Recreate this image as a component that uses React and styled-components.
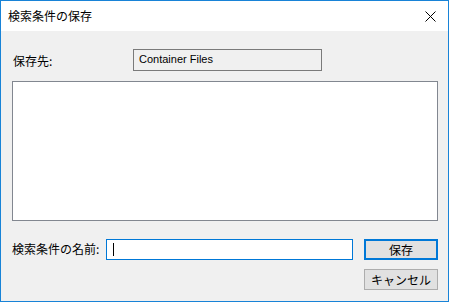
import React from 'react'
import styled, { createGlobalStyle } from 'styled-components'

const GlobalStyle = createGlobalStyle`
  html, body {
    margin: 0;
    padding: 0;
    background: #ffffff;
  }
  * { box-sizing: border-box; }
`

const uiFont = `"Noto Sans CJK JP", "Noto Sans", sans-serif`

const Window = styled.div`
  width: 449px;
  height: 302px;
  border: 1px solid #1883d7;
  background: #f0f0f0;
  display: flex;
  flex-direction: column;
  font-family: ${uiFont};
  font-size: 12px;
  color: #000;
  overflow: hidden;
`

const TitleBar = styled.div`
  height: 30px;
  flex: none;
  background: #ffffff;
  display: flex;
  align-items: center;
  justify-content: space-between;
  padding-left: 7px;
`

const Title = styled.span`
  font-size: 12px;
  line-height: 1;
  margin-top: -1px;
`

const CloseButton = styled.div`
  width: 46px;
  height: 30px;
  display: flex;
  align-items: center;
  justify-content: center;
  margin-right: -1px;
  padding-left: 8px;
`

const Body = styled.div`
  flex: 1;
  padding: 18px 10px 0 11px;
  display: flex;
  flex-direction: column;
`

const Row = styled.div`
  display: flex;
  align-items: ${p => p.$align || 'center'};
`

const Label = styled.span`
  width: ${p => p.$width}px;
  flex: none;
  padding-left: ${p => p.$pad || 0}px;
  line-height: 1;
  margin-top: ${p => p.$top || 0}px;
`

const ReadOnlyField = styled.div`
  width: 189px;
  height: 22px;
  border: 1px solid #7a7a7a;
  background: #f0f0f0;
  font-family: "Liberation Sans", Arial, sans-serif;
  font-size: 11px;
  padding: 3px 0 0 5px;
`

const ListBox = styled.div`
  margin-top: 10px;
  width: 426px;
  height: 140px;
  border: 1px solid #828790;
  background: #ffffff;
`

const BottomRow = styled(Row)`
  margin-top: 18px;
`

const TextInput = styled.div`
  width: 247px;
  height: 21px;
  flex: none;
  border: 1px solid #0078d7;
  background: #ffffff;
  display: flex;
  align-items: center;
  padding-left: 6px;
`

const Caret = styled.span`
  width: 1px;
  height: 13px;
  background: #000;
`

const ButtonColumn = styled.div`
  display: flex;
  flex-direction: column;
  gap: 9px;
  margin-left: 11px;
`

const Button = styled.div`
  width: 74px;
  height: ${p => (p.$default ? 21 : 21)}px;
  background: #e1e1e1;
  border: ${p => (p.$default ? '2px solid #0078d7' : '1px solid #adadad')};
  display: flex;
  align-items: center;
  justify-content: center;
  font-size: 12px;
  line-height: 1;
`

function CloseIcon() {
  return (
    <svg width="11" height="11" viewBox="0 0 11 11">
      <path d="M0.5 0.5 L10.5 10.5 M10.5 0.5 L0.5 10.5" stroke="#000" strokeWidth="1" fill="none" />
    </svg>
  )
}

export default function App() {
  return (
    <>
      <GlobalStyle />
      <Window>
        <TitleBar>
          <Title>検索条件の保存</Title>
          <CloseButton>
            <CloseIcon />
          </CloseButton>
        </TitleBar>
        <Body>
          <Row>
            <Label $width={121} $pad={1} $top={1}>保存先:</Label>
            <ReadOnlyField>Container Files</ReadOnlyField>
          </Row>
          <ListBox />
          <BottomRow $align="flex-start">
            <Label $width={94} $top={4}>検索条件の名前:</Label>
            <TextInput>
              <Caret />
            </TextInput>
            <ButtonColumn>
              <Button $default>保存</Button>
              <Button>キャンセル</Button>
            </ButtonColumn>
          </BottomRow>
        </Body>
      </Window>
    </>
  )
}
